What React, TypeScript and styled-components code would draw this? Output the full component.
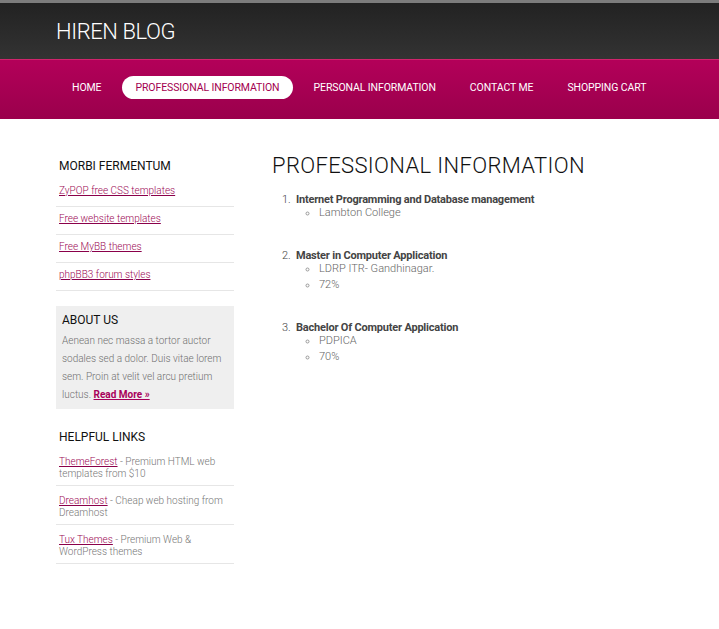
import styled, { createGlobalStyle } from "styled-components";

const pink = "#a3004f";
const linkPink = "#9c0a55";

const GlobalStyle = createGlobalStyle`
    html, body {
        margin: 0;
        padding: 0;
        background: #ffffff;
        font-family: Roboto, "Noto Sans", sans-serif;
    }
`;

const TopStripe = styled.div`
    height: 3px;
    background: #7c7c7c;
`;

const Header = styled.header`
    height: 56px;
    background: linear-gradient(#222222, #333333);
    display: flex;
    align-items: center;
    padding-left: 56px;
`;

const Logo = styled.h1`
    margin: 0;
    font-size: 22px;
    font-weight: 300;
    color: #ffffff;
    letter-spacing: -0.4px;
`;

const NavBar = styled.nav`
    height: 60px;
    border-top: 1px solid #d0246c;
    box-sizing: border-box;
    background: linear-gradient(#b30059, #9a004c);
    display: flex;
    align-items: center;
    padding: 0 0 4px 59px;
    gap: 8px;
`;

const NavItem = styled.a<{ $active?: boolean }>`
    height: 23px;
    line-height: 23px;
    padding: 0 13px;
    border-radius: 12px;
    font-size: 10.5px;
    font-weight: 400;
    letter-spacing: -0.1px;
    color: ${(p) => (p.$active ? pink : "#ffffff")};
    background: ${(p) => (p.$active ? "#ffffff" : "transparent")};
    text-decoration: none;
    white-space: nowrap;
`;

const Page = styled.div`
    display: flex;
    padding: 36px 0 60px 56px;
    gap: 38px;
`;

const Sidebar = styled.aside`
    width: 178px;
    flex-shrink: 0;
`;

const SideHeading = styled.h3<{ $inBox?: boolean }>`
    margin: 2px 0 0;
    padding: 0 ${(p) => (p.$inBox ? "0" : "3px")};
    font-size: 12px;
    font-weight: 400;
    color: #111111;
    line-height: 18px;
`;

const LinkList = styled.ul`
    list-style: none;
    margin: 4px 0 0 0;
    padding: 0;
`;

const LinkItem = styled.li`
    padding: 3px 3px 6px;
    border-bottom: 1px solid #e6e6e6;
    font-size: 10px;
    font-weight: 300;
    line-height: 18px;
`;

const SideLink = styled.a`
    color: ${linkPink};
    text-decoration: underline;
    text-decoration-color: #8a004a;
`;

const AboutBox = styled.div`
    margin: 15px 0 19px;
    padding: 3px 6px 5px;
    background: #efefef;
`;

const AboutText = styled.p`
    margin: 3px 0 0;
    font-size: 10px;
    font-weight: 300;
    line-height: 18px;
    color: #6f6f6f;
`;

const ReadMore = styled.a`
    font-weight: 700;
    color: #a8005a;
    text-decoration: underline;
`;

const HelpList = styled.ul`
    list-style: none;
    margin: 10px 0 0 0;
    padding: 0;
`;

const HelpItem = styled.li`
    padding: 9px 3px 5px;
    border-bottom: 1px solid #e6e6e6;
    font-size: 10px;
    font-weight: 300;
    line-height: 12px;
    color: #777777;

    &:first-child {
        padding-top: 0;
    }
`;

const Main = styled.main`
    flex: 1;
`;

const Title = styled.h2`
    margin: 0;
    font-size: 22px;
    font-weight: 300;
    color: #111111;
    line-height: 22px;
    letter-spacing: 0.35px;
`;

const Degrees = styled.ol`
    margin: 16px 0 0;
    padding-left: 24px;
    font-size: 11px;
    color: #444444;
`;

const Degree = styled.li`
    margin-bottom: 27px;
    line-height: 13px;

    &::marker {
        content: counter(list-item) ".\\00a0\\00a0 ";
        font-weight: 300;
    }
`;

const DegreeName = styled.strong`
    font-weight: 700;
    letter-spacing: -0.2px;
`;

const Details = styled.ul`
    list-style: circle;
    margin: 0;
    padding-left: 23px;
    font-weight: 300;
    color: #666666;

    li {
        line-height: 13px;
        padding-bottom: 3px;
    }
    li::marker {
        color: #999999;
    }
`;

const menu = [
    "HOME",
    "PROFESSIONAL INFORMATION",
    "PERSONAL INFORMATION",
    "CONTACT ME",
    "SHOPPING CART",
];

const sideLinks = [
    "ZyPOP free CSS templates",
    "Free website templates",
    "Free MyBB themes",
    "phpBB3 forum styles",
];

const helpful = [
    { name: "ThemeForest", text: " - Premium HTML web templates from $10" },
    { name: "Dreamhost", text: " - Cheap web hosting from Dreamhost" },
    { name: "Tux Themes", text: " - Premium Web & WordPress themes" },
];

const degrees = [
    { name: "Internet Programming and Database management", details: ["Lambton College"] },
    { name: "Master in Computer Application", details: ["LDRP ITR- Gandhinagar.", "72%"] },
    { name: "Bachelor Of Computer Application", details: ["PDPICA", "70%"] },
];

const App = () => {
    return (
        <>
            <GlobalStyle />
            <TopStripe />
            <Header>
                <Logo>HIREN BLOG</Logo>
            </Header>
            <NavBar>
                {menu.map((item) => (
                    <NavItem key={item} href="#" $active={item === "PROFESSIONAL INFORMATION"}>
                        {item}
                    </NavItem>
                ))}
            </NavBar>
            <Page>
                <Sidebar>
                    <SideHeading>MORBI FERMENTUM</SideHeading>
                    <LinkList>
                        {sideLinks.map((link) => (
                            <LinkItem key={link}>
                                <SideLink href="#">{link}</SideLink>
                            </LinkItem>
                        ))}
                    </LinkList>
                    <AboutBox>
                        <SideHeading $inBox>ABOUT US</SideHeading>
                        <AboutText>
                            Aenean nec massa a tortor auctor sodales sed a dolor. Duis vitae lorem
                            sem. Proin at velit vel arcu pretium luctus.{" "}
                            <ReadMore href="#">Read More »</ReadMore>
                        </AboutText>
                    </AboutBox>
                    <SideHeading>HELPFUL LINKS</SideHeading>
                    <HelpList>
                        {helpful.map((h) => (
                            <HelpItem key={h.name}>
                                <SideLink href="#">{h.name}</SideLink>
                                {h.text}
                            </HelpItem>
                        ))}
                    </HelpList>
                </Sidebar>
                <Main>
                    <Title>PROFESSIONAL INFORMATION</Title>
                    <Degrees>
                        {degrees.map((d) => (
                            <Degree key={d.name}>
                                <DegreeName>{d.name}</DegreeName>
                                <Details>
                                    {d.details.map((x) => (
                                        <li key={x}>{x}</li>
                                    ))}
                                </Details>
                            </Degree>
                        ))}
                    </Degrees>
                </Main>
            </Page>
        </>
    );
};

export default App;
